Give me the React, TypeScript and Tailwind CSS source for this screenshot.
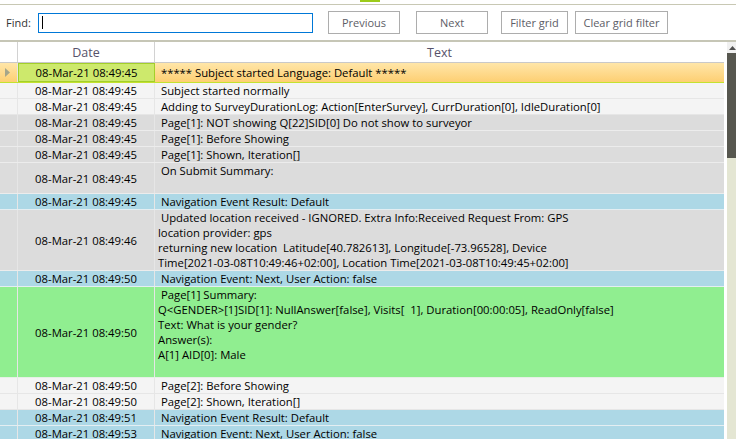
import React from 'react';

type Tone = 'current' | 'light' | 'gray' | 'blue' | 'green';

type LogRow = {
  date: string;
  lines: string[];
  tone: Tone;
};

const toneClass: Record<Tone, string> = {
  current: 'bg-linear-to-b from-[#ffe6a8] to-[#fdcf72] border-[#c4e22e]',
  light: 'bg-[#f4f4f4] border-[#e6e6e6]',
  gray: 'bg-[#dcdcdc] border-[#ececec]',
  blue: 'bg-[#add8e6] border-[#e4eef2]',
  green: 'bg-[#90ee90] border-[#e6f0e6]'
};

const rows: LogRow[] = [
  { date: '08-Mar-21 08:49:45', lines: [' ***** Subject started Language: Default *****'], tone: 'current' },
  { date: '08-Mar-21 08:49:45', lines: [' Subject started normally'], tone: 'light' },
  {
    date: '08-Mar-21 08:49:45',
    lines: [' Adding to SurveyDurationLog: Action[EnterSurvey], CurrDuration[0], IdleDuration[0]'],
    tone: 'light'
  },
  { date: '08-Mar-21 08:49:45', lines: [' Page[1]: NOT showing Q[22]SID[0] Do not show to surveyor'], tone: 'gray' },
  { date: '08-Mar-21 08:49:45', lines: [' Page[1]: Before Showing'], tone: 'gray' },
  { date: '08-Mar-21 08:49:45', lines: [' Page[1]: Shown, Iteration[]'], tone: 'gray' },
  { date: '08-Mar-21 08:49:45', lines: [' On Submit Summary:', ''], tone: 'gray' },
  { date: '08-Mar-21 08:49:45', lines: [' Navigation Event Result: Default'], tone: 'blue' },
  {
    date: '08-Mar-21 08:49:46',
    lines: [
      ' Updated location received - IGNORED. Extra Info:Received Request From: GPS',
      'location provider: gps',
      'returning new location  Latitude[40.782613], Longitude[-73.96528], Device',
      'Time[2021-03-08T10:49:46+02:00], Location Time[2021-03-08T10:49:45+02:00]'
    ],
    tone: 'gray'
  },
  { date: '08-Mar-21 08:49:50', lines: [' Navigation Event: Next, User Action: false'], tone: 'blue' },
  {
    date: '08-Mar-21 08:49:50',
    lines: [
      ' Page[1] Summary:',
      'Q<GENDER>[1]SID[1]: NullAnswer[false], Visits[  1], Duration[00:00:05], ReadOnly[false]',
      'Text: What is your gender?',
      'Answer(s):',
      'A[1] AID[0]: Male',
      ''
    ],
    tone: 'green'
  },
  { date: '08-Mar-21 08:49:50', lines: [' Page[2]: Before Showing'], tone: 'light' },
  { date: '08-Mar-21 08:49:50', lines: [' Page[2]: Shown, Iteration[]'], tone: 'light' },
  { date: '08-Mar-21 08:49:51', lines: [' Navigation Event Result: Default'], tone: 'blue' },
  { date: '08-Mar-21 08:49:53', lines: [' Navigation Event: Next, User Action: false'], tone: 'blue' }
];

function ToolButton({ label, className }: { label: string; className: string }) {
  return (
    <button
      className={`h-[23px] border border-[#adadad] bg-white text-[11px] leading-[15px] text-[#5d5d66] flex items-center justify-center ${className}`}
    >
      {label}
    </button>
  );
}

function Row({ row }: { row: LogRow }) {
  const current = row.tone === 'current';
  return (
    <div className={`flex shrink-0 border-b text-[11.3px] leading-[15px] text-black ${toneClass[row.tone]}`}>
      <div className="w-[18px] shrink-0 border-r border-[#e6e6e6] flex items-center justify-center">
        {current && (
          <svg width="5" height="9" viewBox="0 0 5 9" className="-ml-[2px]">
            <polygon points="0,0 5,4.5 0,9" fill="#a6a68a" />
          </svg>
        )}
      </div>
      <div
        className={`w-[137px] shrink-0 flex items-center justify-center ${
          current ? 'bg-[#cde96c] border border-[#a3cf2a]' : 'border-r border-[#e6e6e6]'
        }`}
      >
        {row.date}
      </div>
      <div className={`flex-1 pl-[3px] whitespace-pre ${current ? 'h-[19px] flex items-center' : ''}`}>
        {current ? (
          row.lines[0]
        ) : (
          row.lines.map((line, i) => (
            <div key={i} className="h-[15px]">
              {line}
            </div>
          ))
        )}
      </div>
    </div>
  );
}

export default function App() {
  return (
    <div className="w-[736px] h-[439px] overflow-hidden bg-white font-['Open_Sans','Liberation_Sans',sans-serif] flex flex-col">
      <div className="h-[5px] shrink-0 border-b border-[#c8c8b4]">
        <div className="ml-[360px] w-[20px] h-[2px] bg-[#9ccb1a]" />
      </div>

      <div className="h-[35px] shrink-0 flex items-center">
        <span className="ml-[6px] w-[32px] text-[11px] leading-[15px] text-[#333]">Find:</span>
        <div className="w-[275px] h-[20px] border border-[#0078d7] flex items-center pl-[3px]">
          <span className="w-px h-[13px] bg-black" />
        </div>
        <ToolButton label="Previous" className="ml-[15px] w-[72px]" />
        <ToolButton label="Next" className="ml-[16px] w-[72px]" />
        <ToolButton label="Filter grid" className="ml-[13px] w-[67px]" />
        <ToolButton label="Clear grid filter" className="ml-[7px] w-[93px]" />
      </div>

      <div className="h-[2px] shrink-0 bg-[#c6c6b6]" />

      <div className="flex flex-1 min-h-0">
        <div className="w-[724px] shrink-0 flex flex-col overflow-hidden">
          <div className="h-[21px] shrink-0 flex border-b border-[#c9c9c9] bg-white text-[12.5px] leading-[17px] text-[#57526a]">
            <div className="w-[18px] shrink-0 border-r border-[#d2d2d2]" />
            <div className="w-[137px] shrink-0 border-r border-[#d2d2d2] flex items-center justify-center">
              Date
            </div>
            <div className="flex-1 flex items-center justify-center">Text</div>
          </div>
          {rows.map((row, i) => (
            <Row key={i} row={row} />
          ))}
        </div>

        <div className="w-[3px] shrink-0 bg-white" />

        <div className="w-[9px] shrink-0 flex flex-col">
          <div className="h-[11px] shrink-0 bg-[#f0f0f0] pt-[4px] pl-[2px]">
            <svg width="7" height="4" viewBox="0 0 7 4" className="block">
              <polygon points="0,4 3.5,0 7,4" fill="#4f4f4f" />
            </svg>
          </div>
          <div className="h-[105px] shrink-0 bg-[#57574f]" />
          <div className="flex-1 bg-[#e4e6d3]" />
        </div>
      </div>
    </div>
  );
}
